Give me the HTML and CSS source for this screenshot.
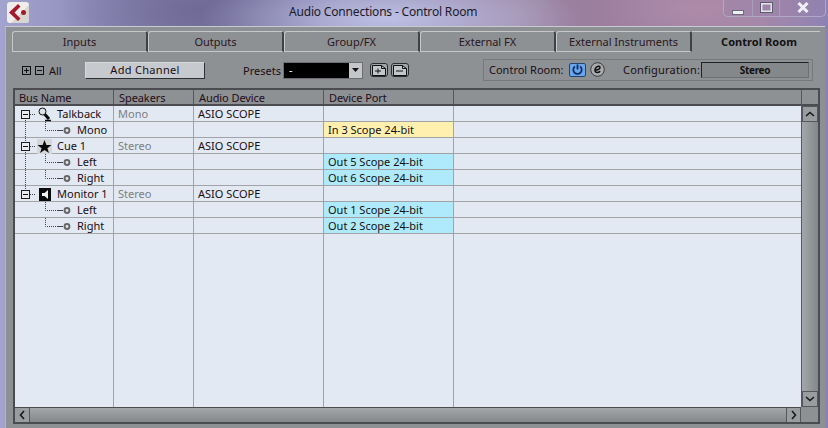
FILE: index.html
```html
<!DOCTYPE html>
<html lang="en">
<head>
<meta charset="utf-8">
<title>Audio Connections - Control Room</title>
<link rel="stylesheet" href="styles.css">
</head>
<body>
<svg class="defs" width="0" height="0" aria-hidden="true">
  <defs>
    <symbol id="box" viewBox="0 0 9 9"><rect x=".5" y=".5" width="8" height="8" fill="#e8ebef" stroke="#1c1c1c"/><path d="M2 4.5h5" stroke="#111"/></symbol>
    <symbol id="kid" viewBox="0 0 63 16">
      <path d="M10.5 0V16" stroke="#444" stroke-dasharray="1 1"/>
      <path d="M30.5 0V8.500H42" fill="none" stroke="#444" stroke-dasharray="1 1"/>
      <path d="M42 8.500h6" stroke="#444"/>
      <circle cx="52" cy="8.500" r="2.400" fill="#e2e9f2" stroke="#666" stroke-width="2"/>
    </symbol>
    <symbol id="kidlast" viewBox="0 0 63 16">
      <path d="M30.500 0V8.500H42" fill="none" stroke="#444" stroke-dasharray="1 1"/>
      <path d="M42 8.500h6" stroke="#444"/>
      <circle cx="52" cy="8.500" r="2.400" fill="#e2e9f2" stroke="#666" stroke-width="2"/>
    </symbol>
  </defs>
</svg>

<header class="titlebar">
  <svg class="logo" width="22" height="21" viewBox="0 0 22 21">
    <rect width="22" height="21" rx="3" fill="#f0eeea"/>
    <path d="M22 3V18a3 3 0 0 1-3 3H4z" fill="#d8d6d2"/>
    <path d="M11 2 2 10.500 11 19l2.500-2.500-6-6 6-6z" fill="#a5182e"/>
    <circle cx="16.500" cy="10.500" r="2.500" fill="#a5182e"/>
  </svg>
  <h1 class="title">Audio Connections - Control Room</h1>
  <div class="winbtns">
    <span class="winbtn min"><svg width="12" height="5" viewBox="0 0 12 5"><rect x=".5" y=".5" width="11" height="4" fill="#eef0f4" stroke="#6a6a7a"/></svg></span>
    <span class="winbtn max"><svg width="13" height="11" viewBox="0 0 13 11"><rect x="1.500" y="1.500" width="10" height="8" fill="none" stroke="#e4e6ec" stroke-width="2"/><rect x=".5" y=".5" width="12" height="10" fill="none" stroke="#5c5c70"/></svg></span>
    <span class="winbtn close"><svg width="12" height="11" viewBox="0 0 12 11"><path d="M1.500 1 10.500 10M10.500 1 1.500 10" stroke="#eef0f4" stroke-width="3"/></svg></span>
  </div>
</header>

<main class="window">
  <nav class="tabs">
    <span class="tab">Inputs</span>
    <span class="tab">Outputs</span>
    <span class="tab">Group/FX</span>
    <span class="tab">External FX</span>
    <span class="tab">External Instruments</span>
    <span class="tab active">Control Room</span>
  </nav>

  <div class="toolbar">
    <div class="allctl">
      <svg width="9" height="9" viewBox="0 0 9 9"><rect x=".5" y=".5" width="8" height="8" fill="none" stroke="#111"/><path d="M2 4.500h5M4.500 2v5" stroke="#111"/></svg>
      <svg width="9" height="9" viewBox="0 0 9 9"><rect x=".5" y=".5" width="8" height="8" fill="none" stroke="#111"/><path d="M2 4.500h5" stroke="#111"/></svg>
      <span class="alllabel">All</span>
    </div>
    <button class="addbtn" type="button">Add Channel</button>
    <span class="presets">Presets</span>
    <div class="select"><span class="selval">-</span><span class="selarrow"><svg width="7" height="4" viewBox="0 0 7 4"><path d="M0 0h7L3.500 4z" fill="#111"/></svg></span></div>
    <span class="iconbtn first"><svg width="14" height="11" viewBox="0 0 14 11"><path d="M.5.5h9l4 3v7H.5z" fill="#c4c7ca" stroke="#111"/><path d="M9.500.5v3h4" fill="none" stroke="#111"/><path d="M3 6h6M6 3.500v5" stroke="#111"/></svg></span>
    <span class="iconbtn"><svg width="14" height="11" viewBox="0 0 14 11"><path d="M.5.5h9l4 3v7H.5z" fill="#c4c7ca" stroke="#111"/><path d="M9.500.5v3h4" fill="none" stroke="#111"/><path d="M3 6h7" stroke="#111"/></svg></span>
    <div class="crgroup">
      <span class="crlabel">Control Room:</span>
      <span class="power"><svg width="11" height="11" viewBox="0 0 11 11"><path d="M3 2.400a4.200 4.200 0 1 0 5 0" fill="none" stroke="#0c2f66" stroke-width="1.800"/><path d="M5.500 .5v5" stroke="#0c2f66" stroke-width="1.800"/></svg></span>
      <span class="ebtn"><svg width="15" height="15" viewBox="0 0 15 15"><circle cx="7.500" cy="7.500" r="6.800" fill="#a9abad" stroke="#3a3a3a"/><path d="M4.600 8c2.400.4 5.600-.8 5.400-2.600-.2-1.700-3-1.400-4.300.6-1.300 2-.9 4.600 1.400 4.600 1.200 0 2.300-.5 3.100-1.300" fill="none" stroke="#111" stroke-width="1.500"/></svg></span>
      <span class="cfglabel">Configuration:</span>
      <span class="cfgval">Stereo</span>
    </div>
  </div>

  <section class="table">
    <div class="tablemain">
      <div class="row head">
        <div class="cell c1">Bus Name</div><div class="cell c2">Speakers</div><div class="cell c3">Audio Device</div><div class="cell c4">Device Port</div><div class="cell c5"></div>
      </div>
      <div class="row">
        <div class="cell c1">
          <svg class="glyph" width="43" height="16" viewBox="0 0 43 16">
            <path d="M10.500 8V16" stroke="#444" stroke-dasharray="1 1"/><path d="M15 8.500h5" stroke="#444" stroke-dasharray="1 1"/>
            <use href="#box" x="6" y="4" width="9" height="9"/>
            <path d="M29.500 8 34 13" stroke="#0a0a0a" stroke-width="3"/><path d="M30 14.500h6" stroke="#0a0a0a" stroke-width="1.500"/>
            <circle cx="27.500" cy="5.500" r="3.500" fill="#dfe2e6" stroke="#111"/>
          </svg>Talkback
        </div>
        <div class="cell c2 muted">Mono</div><div class="cell c3">ASIO SCOPE</div><div class="cell c4"></div><div class="cell c5"></div>
      </div>
      <div class="row">
        <div class="cell c1"><svg class="glyph" width="63" height="16"><use href="#kid" width="63" height="16"/></svg>Mono</div>
        <div class="cell c2"></div><div class="cell c3"></div><div class="cell c4 port-in">In 3 Scope 24-bit</div><div class="cell c5"></div>
      </div>
      <div class="row">
        <div class="cell c1">
          <svg class="glyph" width="43" height="16" viewBox="0 0 43 16">
            <path d="M10.500 0V16" stroke="#444" stroke-dasharray="1 1"/><path d="M15 8.500h5" stroke="#444" stroke-dasharray="1 1"/>
            <use href="#box" x="6" y="4" width="9" height="9"/>
            <rect x="22" y="1" width="15" height="15" fill="#d4d6d9"/>
            <path d="M29.500 2 31.400 7H36.500L32.400 10.200 34 15 29.500 12 25 15 26.600 10.200 22.500 7H27.600z" fill="#0a0a0a"/>
          </svg>Cue 1
        </div>
        <div class="cell c2 muted">Stereo</div><div class="cell c3">ASIO SCOPE</div><div class="cell c4"></div><div class="cell c5"></div>
      </div>
      <div class="row">
        <div class="cell c1"><svg class="glyph" width="63" height="16"><use href="#kid" width="63" height="16"/></svg>Left</div>
        <div class="cell c2"></div><div class="cell c3"></div><div class="cell c4 port-out">Out 5 Scope 24-bit</div><div class="cell c5"></div>
      </div>
      <div class="row">
        <div class="cell c1"><svg class="glyph" width="63" height="16"><use href="#kid" width="63" height="16"/></svg>Right</div>
        <div class="cell c2"></div><div class="cell c3"></div><div class="cell c4 port-out">Out 6 Scope 24-bit</div><div class="cell c5"></div>
      </div>
      <div class="row">
        <div class="cell c1">
          <svg class="glyph" width="43" height="16" viewBox="0 0 43 16">
            <path d="M10.500 0V8" stroke="#444" stroke-dasharray="1 1"/><path d="M15 8.500h5" stroke="#444" stroke-dasharray="1 1"/>
            <use href="#box" x="6" y="4" width="9" height="9"/>
            <rect x="24" y="2" width="12" height="13" fill="#0a0a0a"/>
            <path d="M27 7h2.500L33 4v9L29.500 10H27z" fill="#f0f2f4"/>
          </svg>Monitor 1
        </div>
        <div class="cell c2 muted">Stereo</div><div class="cell c3">ASIO SCOPE</div><div class="cell c4"></div><div class="cell c5"></div>
      </div>
      <div class="row">
        <div class="cell c1"><svg class="glyph" width="63" height="16"><use href="#kidlast" width="63" height="16"/></svg>Left</div>
        <div class="cell c2"></div><div class="cell c3"></div><div class="cell c4 port-out">Out 1 Scope 24-bit</div><div class="cell c5"></div>
      </div>
      <div class="row">
        <div class="cell c1"><svg class="glyph" width="63" height="16"><use href="#kidlast" width="63" height="16"/></svg>Right</div>
        <div class="cell c2"></div><div class="cell c3"></div><div class="cell c4 port-out">Out 2 Scope 24-bit</div><div class="cell c5"></div>
      </div>
      <div class="row filler">
        <div class="cell c1"></div><div class="cell c2"></div><div class="cell c3"></div><div class="cell c4"></div><div class="cell c5"></div>
      </div>
    </div>
    <div class="vscroll">
      <div class="vcorner"></div>
      <span class="sbtn"><svg width="10" height="6" viewBox="0 0 10 6"><path d="M1 5 5 1.500 9 5" fill="none" stroke="#1a1a1a" stroke-width="1.600"/></svg></span>
      <div class="vtrack"></div>
      <span class="sbtn"><svg width="10" height="6" viewBox="0 0 10 6"><path d="M1 1 5 4.500 9 1" fill="none" stroke="#1a1a1a" stroke-width="1.600"/></svg></span>
    </div>
    <div class="hscroll">
      <span class="hbtn left"><svg width="6" height="10" viewBox="0 0 6 10"><path d="M5 1 1.500 5 5 9" fill="none" stroke="#1a1a1a" stroke-width="1.600"/></svg></span>
      <div class="htrack"></div>
      <span class="hbtn right"><svg width="6" height="10" viewBox="0 0 6 10"><path d="M1 1 4.500 5 1 9" fill="none" stroke="#1a1a1a" stroke-width="1.600"/></svg></span>
    </div>
  </section>
</main>
</body>
</html>
```
FILE: styles.css
```css
* { box-sizing: border-box; }
html, body { margin: 0; height: 100%; }
body {
  width: 828px;
  height: 428px;
  overflow: hidden;
  display: flex;
  flex-direction: column;
  font-family: "Noto Sans", "Open Sans", sans-serif;
  font-size: 11px;
  color: #1a0d14;
  background:
    radial-gradient(ellipse 190px 45px at 390px 18px, #bcc0e4 0%, rgba(188,192,228,0) 100%),
    radial-gradient(ellipse 140px 60px at 200px 10px, #6f6a96 0%, rgba(111,106,150,0) 100%),
    radial-gradient(ellipse 140px 50px at 700px 8px, #ae8ba8 0%, rgba(174,139,168,0) 100%),
    linear-gradient(90deg, #a3a3d0 0, #918ebb 90px, #7c76a2 220px, #8f88b6 320px, #a08aa8 520px, #96799b 600px, #9c84ab 760px, #8b82b6 828px);
}
.defs { position: absolute; }

.titlebar {
  height: 26px;
  flex: none;
  display: flex;
  align-items: flex-start;
  padding-left: 7px;
}
.logo { margin-top: 2px; flex: none; }
.title {
  margin: 5px 0 0 260px;
  font-size: 12px;
  font-weight: 400;
  line-height: 14px;
  letter-spacing: -.18px;
  color: #1c1a28;
  white-space: nowrap;
}
.winbtns {
  margin-left: auto;
  margin-right: 2px;
  display: flex;
  height: 17px;
  border: 1px solid #b0a8c6;
  border-top: 0;
  border-radius: 0 0 5px 5px;
  background: rgba(150,130,170,.35);
}
.winbtn {
  display: flex;
  align-items: center;
  justify-content: center;
  border-right: 1px solid #a89fbe;
}
.winbtn.min { width: 29px; padding-top: 9px; }
.winbtn.max { width: 27px; padding-bottom: 2px; }
.winbtn.close { width: 45px; border-right: 0; padding-bottom: 2px; }

.window {
  flex: 1;
  margin: 0 3px 0 5px;
  min-height: 0;
  display: flex;
  flex-direction: column;
  background: #8e9194;
  border-top: 1px solid #c9cbd0;
  border-left: 1px solid #b4b6bc;
  padding: 4px 5px 4px 6px;
}

.tabs { display: flex; height: 21px; flex: none; }
.tab {
  width: 136px;
  flex: none;
  display: flex;
  align-items: center;
  justify-content: center;
  color: #2a1620;
  border: 1px solid #c5c7c9;
  border-right: 2px solid #3f4144;
  border-radius: 3px 3px 0 0;
  line-height: 18px;
}
.tab.active {
  font-weight: 700;
  letter-spacing: .05px;
  color: #111;
  border: 0;
  border-top: 1px solid #c5c7c9;
  flex: 1;
  border-radius: 0;
  padding-left: 6px;
}

.toolbar {
  height: 36px;
  flex: none;
  display: flex;
  align-items: center;
}
.allctl { display: flex; align-items: center; gap: 4px; margin-left: 10px; width: 63px; }
.alllabel { margin-left: 1px; }
.addbtn {
  width: 120px;
  height: 17px;
  padding: 0;
  font: inherit;
  letter-spacing: .3px;
  color: inherit;
  background: #c6c9cd;
  border: 1px solid;
  border-color: #d6d8da #2e3033 #2e3033 #d6d8da;
  line-height: 14px;
}
.presets { margin-left: 38px; width: 40px; }
.select {
  width: 80px;
  height: 17px;
  display: flex;
  justify-content: space-between;
  background: #000;
  border: 1px solid #6c6e71;
  color: #fff;
}
.selval { padding-left: 5px; line-height: 14px; }
.selarrow {
  width: 13px;
  background: #c4c6c9;
  display: flex;
  align-items: center;
  justify-content: center;
}
.iconbtn {
  width: 18px;
  height: 14px;
  margin-left: 3px;
  display: flex;
  align-items: center;
  justify-content: center;
  background: #a5a8ab;
  border: 1px solid #2a2c2f;
  border-radius: 3px;
}
.iconbtn.first { margin-left: 7px; }
.crgroup {
  margin-left: 74px;
  width: 330px;
  height: 22px;
  display: flex;
  align-items: center;
  border: 1px solid #777a7d;
  padding-left: 5px;
  margin-top: -1px;
}
.crlabel { width: 80px; white-space: nowrap; }
.power {
  width: 17px;
  height: 14px;
  display: flex;
  align-items: center;
  justify-content: center;
  background: #6aa6ec;
  border: 1px solid #24456e;
  border-radius: 2px;
}
.ebtn { margin-left: 4px; display: flex; }
.cfglabel { margin-left: 18px; width: 78px; white-space: nowrap; letter-spacing: .2px; }
.cfgval {
  width: 108px;
  height: 16px;
  display: flex;
  align-items: center;
  justify-content: center;
  font-size: 10px;
  font-weight: 700;
  letter-spacing: -.3px;
  padding-top: 1px;
  color: #111;
  background: #85888b;
  border: 1px solid;
  border-color: #1e2022 #6e7073 #6e7073 #1e2022;
}

.table {
  flex: 1;
  min-height: 0;
  display: grid;
  grid-template-columns: 1fr 17px;
  grid-template-rows: 1fr 15px;
  border: 2px solid #4a4c4f;
  margin: 0 0 0 1px;
  background: #8e9194;
  width: 807px;
}
.tablemain {
  min-height: 0;
  min-width: 0;
  display: flex;
  flex-direction: column;
  background: #e2e9f2;
}
.row { display: flex; height: 16px; flex: none; }
.row.head {
  background: #8e9194;
  border-bottom: 2px solid #4a4c4f;
}
.row.filler { flex: 1; }
.cell {
  display: flex;
  align-items: center;
  height: 100%;
  white-space: nowrap;
  padding-left: 4px;
  line-height: 15px;
  border-right: 1px solid #a1a4a7;
  border-bottom: 1px solid #a1a4a7;
}
.head .cell { border-bottom: 0; border-right-color: #55575a; color: #220c18; letter-spacing: -.08px; padding-left: 5px; }
.filler .cell { border-bottom: 0; }
.c1 { width: 99px; padding-left: 0; }
.head .c1 { padding-left: 4px; }
.c2 { width: 80px; }
.c3 { width: 130px; }
.c4 { width: 130px; }
.c5 { flex: 1; border-right: 0; }
.glyph { flex: none; align-self: flex-start; margin-right: -1px; }
.muted { color: #7b7e84; }
.port-in { background: #fff0b0; color: #111; }
.port-out { background: #aeeafb; color: #111; }

.vscroll { display: flex; flex-direction: column; border-left: 1px solid #55575a; }
.vcorner { height: 16px; flex: none; border-bottom: 2px solid #4a4c4f; }
.sbtn {
  height: 16px;
  flex: none;
  display: flex;
  align-items: center;
  justify-content: center;
  background: #9a9da0;
  border: 1px solid #55575a;
}
.vtrack { flex: 1; background: linear-gradient(90deg, #a4a7aa, #85888b); }
.hscroll {
  grid-column: 1 / 2;
  display: flex;
  border-top: 1px solid #4a4c4f;
}
.hbtn {
  width: 15px;
  flex: none;
  display: flex;
  align-items: center;
  justify-content: center;
  background: #9a9da0;
}
.hbtn.left { border-right: 1px solid #55575a; }
.hbtn.right { border-left: 1px solid #55575a; border-right: 1px solid #55575a; }
.htrack { flex: 1; background: linear-gradient(180deg, #a4a7aa, #85888b); }
```
